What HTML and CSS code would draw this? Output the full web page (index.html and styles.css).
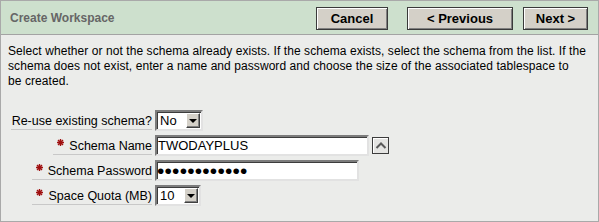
FILE: index.html
```html
<!DOCTYPE html>
<html lang="en">
<head>
    <meta charset="UTF-8">
    <meta name="viewport" content="width=device-width, initial-scale=1.0">
    <title>Create Workspace</title>
    <link rel="stylesheet" href="styles.css">
</head>
<body>

    <div class="region">
        <div class="region-header">
            <h2 class="region-title">Create Workspace</h2>
            <div class="buttons">
                <button class="btn btn-cancel">Cancel</button>
                <button class="btn btn-prev">&lt; Previous</button>
                <button class="btn btn-next">Next &gt;</button>
            </div>
        </div>

        <div class="region-body">
            <p class="intro">Select whether or not the schema already exists. If the schema exists, select the schema from the list. If the schema does not exist, enter a name and password and choose the size of the associated tablespace to<br>be created.</p>

            <div class="form">
                <label class="form-label">Re-use existing schema?</label>
                <div class="field">
                    <span class="combo combo-reuse">
                        <span class="combo-value">No</span>
                        <span class="combo-btn"><span class="arrow-down"></span></span>
                    </span>
                </div>

                <label class="form-label"><span class="req"><svg width="7" height="7" viewBox="0 0 7 7"><path d="M3.5 0V7M0 3.5H7M1 1L6 6M6 1L1 6" stroke="#a01010" stroke-width="1.4"/></svg></span>Schema Name</label>
                <div class="field">
                    <input type="text" class="text-input input-name" value="TWODAYPLUS" readonly>
                    <span class="pop-btn">
                        <svg width="14" height="15" viewBox="0 0 14 15"><path d="M2.5 10L7 5.5L11.5 10" fill="none" stroke="#5a5a5a" stroke-width="2"/></svg>
                    </span>
                </div>

                <label class="form-label"><span class="req"><svg width="7" height="7" viewBox="0 0 7 7"><path d="M3.5 0V7M0 3.5H7M1 1L6 6M6 1L1 6" stroke="#a01010" stroke-width="1.4"/></svg></span>Schema Password</label>
                <div class="field">
                    <input type="password" class="text-input input-pass" value="twodayplus12" readonly>
                </div>

                <label class="form-label"><span class="req"><svg width="7" height="7" viewBox="0 0 7 7"><path d="M3.5 0V7M0 3.5H7M1 1L6 6M6 1L1 6" stroke="#a01010" stroke-width="1.4"/></svg></span>Space Quota (MB)</label>
                <div class="field">
                    <span class="combo combo-quota">
                        <span class="combo-value">10</span>
                        <span class="combo-btn"><span class="arrow-down"></span></span>
                    </span>
                </div>
            </div>
        </div>
    </div>

</body>
</html>
```

FILE: styles.css
```css
body {
    margin: 0;
    font-family: "Liberation Sans", Arial, sans-serif;
    background-color: #fff;
}

.region {
    width: 599px;
    height: 222px;
    box-sizing: border-box;
    border: 1px solid #a9a9a9;
    background-color: #ebecea;
}

.region-header {
    height: 34px;
    box-sizing: border-box;
    border-bottom: 1px solid #a3a3a3;
    background-color: #cde0cd;
    display: flex;
    align-items: center;
    padding: 1px 10px 0 9px;
}

.region-title {
    flex: 1;
    margin: 0;
    font-size: 12px;
    font-weight: bold;
    color: #666;
}

.buttons {
    display: flex;
    gap: 10px;
}

.btn {
    height: 23px;
    padding: 0;
    font-family: "Liberation Sans", Arial, sans-serif;
    font-size: 13px;
    font-weight: bold;
    color: #000;
    background-color: #d4d0c8;
    border: 1px solid #3a3a3a;
    box-shadow: inset 1px 1px #fff, inset -1px -1px #808080;
    cursor: pointer;
}

.btn-cancel {
    width: 72px;
    margin-right: 9px;
}

.btn-prev {
    width: 106px;
}

.btn-next {
    width: 65px;
}

.region-body {
    padding: 9px 0 0 7px;
}

.intro {
    margin: 0;
    font-size: 12px;
    line-height: 15px;
    letter-spacing: 0.07px;
    color: #000;
}

.form {
    margin-top: 21px;
    display: grid;
    grid-template-columns: 144px auto;
    column-gap: 3px;
    row-gap: 4px;
}

.form-label {
    justify-self: end;
    align-self: end;
    margin-bottom: 1px;
    padding-left: 1px;
    font-size: 12.5px;
    line-height: 15px;
    color: #000;
    border-bottom: 1px solid #c8c8c8;
}

.req {
    display: inline-block;
    margin: 0 5px 0 3px;
    vertical-align: 4px;
    line-height: 0;
}

.field {
    display: flex;
    align-items: center;
    gap: 2px;
}

.text-input,
.combo {
    height: 21px;
    box-sizing: border-box;
    border: 2px solid;
    border-color: #7c7c7c #e2e2e2 #e2e2e2 #7c7c7c;
    box-shadow: inset 1px 1px #3c3c3c;
    background-color: #fff;
    font-family: "Liberation Sans", Arial, sans-serif;
    font-size: 13px;
    color: #000;
}

.text-input {
    padding: 0 0 0 1px;
    outline: none;
}

.input-name {
    width: 214px;
}

.input-pass {
    width: 204px;
    padding-left: 0;
    font-size: 21px;
    line-height: 17px;
    letter-spacing: 0.2px;
}

.combo {
    display: flex;
    align-items: center;
    justify-content: space-between;
    padding: 0 1px 0 3px;
}

.combo-reuse {
    width: 48px;
}

.combo-quota {
    width: 46px;
}

.combo-btn {
    width: 14px;
    height: 15px;
    box-sizing: border-box;
    display: flex;
    align-items: center;
    justify-content: center;
    background-color: #d4d0c8;
    border: 1px solid;
    border-color: #fff #404040 #404040 #fff;
    box-shadow: inset -1px -1px #808080;
}

.arrow-down {
    width: 0;
    height: 0;
    border-left: 4px solid transparent;
    border-right: 4px solid transparent;
    border-top: 4px solid #000;
}

.pop-btn {
    width: 17px;
    height: 17px;
    margin-left: 1px;
    box-sizing: border-box;
    display: flex;
    align-items: center;
    justify-content: center;
    background-color: #e4e4e2;
    border: 1px solid #3c3c3c;
    box-shadow: inset 1px 1px #fff;
}
```
